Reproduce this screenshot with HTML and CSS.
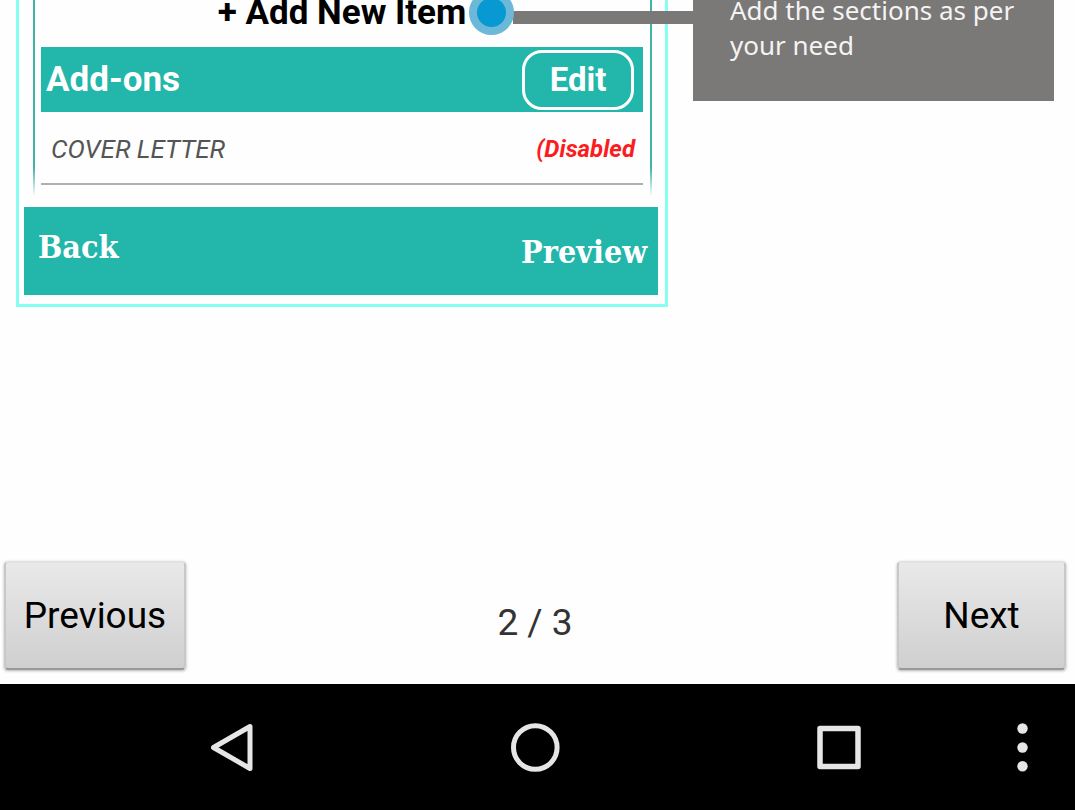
FILE: index.html
```html
<!DOCTYPE html>
<html lang="en">
<head>
<meta charset="utf-8">
<meta name="viewport" content="width=device-width, initial-scale=1">
<title>Resume sections guide</title>
<link rel="stylesheet" href="styles.css">
</head>
<body>
<main class="guide">
  <section class="frame">
    <div class="sheet">
      <button class="add-item" type="button">+ Add New Item</button>
      <header class="section-bar">
        <h2 class="section-title">Add-ons</h2>
        <button class="edit" type="button">Edit</button>
      </header>
      <div class="entry">
        <span class="entry-name">COVER LETTER</span>
        <span class="entry-state">(Disabled</span>
      </div>
    </div>
    <footer class="actions">
      <button class="action" type="button">Back</button>
      <button class="action action-preview" type="button">Preview</button>
    </footer>
  </section>
  <aside class="callout">
    <span class="pointer"></span>
    <p class="callout-text">Add the sections as per your need</p>
  </aside>
</main>
<div class="pager">
  <button class="page-button" type="button">Previous</button>
  <span class="page-count">2 / 3</span>
  <button class="page-button page-next" type="button">Next</button>
</div>
<nav class="system-bar">
  <button class="key" type="button" aria-label="Back">
    <svg width="56" height="56" viewBox="0 0 56 56"><path d="M9.500 28.500 46 7.500V49.500Z" fill="none" stroke="#e6e6e6" stroke-width="5" stroke-linejoin="round"/></svg>
  </button>
  <button class="key" type="button" aria-label="Home">
    <svg width="56" height="56" viewBox="0 0 56 56"><circle cx="28.300" cy="28.500" r="21.800" fill="none" stroke="#e6e6e6" stroke-width="5"/></svg>
  </button>
  <button class="key" type="button" aria-label="Recent apps">
    <svg width="56" height="56" viewBox="0 0 56 56"><rect x="9" y="9.500" width="38" height="38" fill="none" stroke="#e6e6e6" stroke-width="5.500" stroke-linejoin="round"/></svg>
  </button>
  <button class="key" type="button" aria-label="More options">
    <svg width="56" height="56" viewBox="0 0 56 56" fill="#e6e6e6"><circle cx="28.500" cy="9.500" r="5.200"/><circle cx="28.500" cy="28.500" r="5.200"/><circle cx="28.500" cy="47.300" r="5.200"/></svg>
  </button>
</nav>
</body>
</html>
```

FILE: styles.css
```css
*,
*::before {
  box-sizing: border-box;
}

body {
  margin: 0;
  min-height: 100vh;
  display: flex;
  flex-direction: column;
  background: #fefefe;
  font-family: Roboto, "Liberation Sans", sans-serif;
  color: #000;
}

button {
  margin: 0;
  padding: 0;
  border: 0;
  background: none;
  color: inherit;
  font: inherit;
  cursor: pointer;
}

.guide {
  flex: 1;
  display: grid;
  grid-template-columns: 652fr 361fr;
  align-items: start;
  gap: 25px;
  padding: 0 21px 0 16px;
}

.frame {
  padding: 0 7px 9px 5px;
  border: 3px solid #86fff0;
  border-top: 0;
}

.sheet {
  margin: 0 6px 11px 9px;
  padding: 0 7px 11px 6px;
  border: solid;
  border-width: 0 2px;
  border-image: linear-gradient(#3fb3a4 85%, #ffffff) 1;
}

.add-item {
  display: block;
  width: 100%;
  height: 47px;
  padding-bottom: 21px;
  font-size: 35px;
  line-height: 26px;
  font-weight: 700;
}

.section-bar {
  display: flex;
  align-items: center;
  justify-content: space-between;
  height: 65px;
  padding: 0 9px 0 5px;
  background: #23b6aa;
  color: #fff;
}

.section-title {
  margin: 0;
  font-size: 35px;
  line-height: 40px;
  font-weight: 700;
}

.edit {
  width: 112px;
  height: 60px;
  border: 3px solid #fff;
  border-radius: 20px;
  font-size: 33px;
  line-height: 40px;
  font-weight: 700;
}

.entry {
  display: flex;
  align-items: center;
  justify-content: space-between;
  height: 73px;
  padding: 2px 8px 0 10px;
  border-bottom: 2px solid #b0aeae;
  font-size: 26px;
  line-height: 32px;
  font-style: italic;
}

.entry-name {
  color: #555;
}

.entry-state {
  color: #fb1c20;
  font-size: 24px;
  font-weight: 700;
}

.actions {
  display: flex;
  align-items: flex-start;
  justify-content: space-between;
  height: 88px;
  padding: 20px 11px 0 14px;
  background: #23b6aa;
  color: #fff;
}

.action {
  font-family: "DejaVu Serif Condensed", "DejaVu Serif", serif;
  font-size: 32px;
  line-height: 40px;
  font-weight: 700;
}

.action-preview {
  padding-top: 5px;
}

.callout {
  position: relative;
  height: 101px;
  padding: 0 24px 0 37px;
  background: #7b7878;
  color: #f4f4f4;
}

.callout-text {
  margin: -7px 0 0;
  font-family: "Noto Sans", sans-serif;
  font-size: 26px;
  line-height: 35px;
}

.pointer {
  position: absolute;
  top: 11px;
  right: 100%;
  width: 180px;
  height: 13px;
  background: #7b7878;
}

.pointer::before {
  content: "";
  position: absolute;
  top: -21px;
  left: -44px;
  width: 45px;
  height: 45px;
  border: 8px solid #6cb8d8;
  border-radius: 50%;
  background: #0898d2;
}

.pager {
  display: grid;
  grid-template-columns: 1fr auto 1fr;
  align-items: center;
  padding: 0 9px 14px 4px;
}

.page-button {
  justify-self: start;
  width: 182px;
  height: 109px;
  border: 2px solid;
  border-color: #e2e2e2 #c8c8c8 #999 #c8c8c8;
  border-radius: 4px;
  background: linear-gradient(#e9e9e9, #cfcfcf);
  box-shadow: 0 1px 3px rgba(0, 0, 0, 0.3);
  font-size: 37px;
  line-height: 44px;
}

.page-next {
  justify-self: end;
  width: 169px;
}

.page-count {
  padding-top: 14px;
  color: #333;
  font-size: 37px;
  line-height: 44px;
}

.system-bar {
  display: grid;
  grid-template-columns: 1fr 1fr 1fr 62px;
  align-items: center;
  height: 126px;
  padding: 0 22px 0 80px;
  background: #000;
}

.key {
  display: grid;
  place-items: center;
}
```
